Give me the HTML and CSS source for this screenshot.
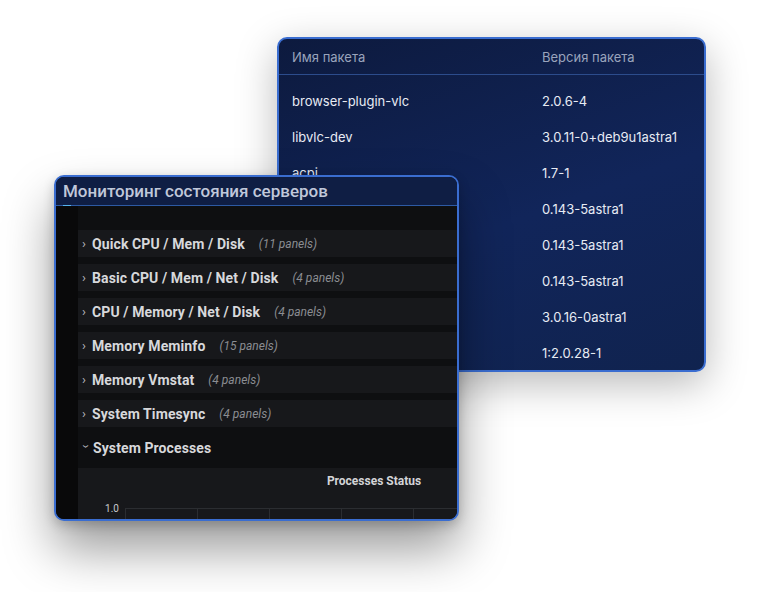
FILE: index.html
```html
<!DOCTYPE html>
<html lang="ru">
<head>
    <meta charset="UTF-8">
    <meta name="viewport" content="width=device-width, initial-scale=1.0">
    <title>Пакеты и мониторинг</title>
    <link rel="stylesheet" href="styles.css">
</head>

<body>
    <div class="desk">

        <div class="window packages">
            <div class="pkg-head">
                <span>Имя пакета</span>
                <span>Версия пакета</span>
            </div>
            <div class="pkg-list">
                <div class="pkg-row"><span>browser-plugin-vlc</span><span>2.0.6-4</span></div>
                <div class="pkg-row"><span>libvlc-dev</span><span>3.0.11-0+deb9u1astra1</span></div>
                <div class="pkg-row"><span>acpi</span><span>1.7-1</span></div>
                <!-- names under the front window are hidden anyway -->
                <div class="pkg-row"><span></span><span>0.143-5astra1</span></div>
                <div class="pkg-row"><span></span><span>0.143-5astra1</span></div>
                <div class="pkg-row"><span></span><span>0.143-5astra1</span></div>
                <div class="pkg-row"><span></span><span>3.0.16-0astra1</span></div>
                <div class="pkg-row"><span></span><span>1:2.0.28-1</span></div>
            </div>
        </div>

        <div class="window monitor">
            <div class="mon-title">Мониторинг состояния серверов</div>
            <div class="mon-body">
                <div class="strip"></div>
                <div class="mon-content">
                    <div class="group"><span class="chev">›</span><b>Quick CPU / Mem / Disk</b><i>(11 panels)</i></div>
                    <div class="group"><span class="chev">›</span><b>Basic CPU / Mem / Net / Disk</b><i>(4 panels)</i></div>
                    <div class="group"><span class="chev">›</span><b>CPU / Memory / Net / Disk</b><i>(4 panels)</i></div>
                    <div class="group"><span class="chev">›</span><b>Memory Meminfo</b><i>(15 panels)</i></div>
                    <div class="group"><span class="chev">›</span><b>Memory Vmstat</b><i>(4 panels)</i></div>
                    <div class="group"><span class="chev">›</span><b>System Timesync</b><i>(4 panels)</i></div>
                    <div class="group open"><span class="chev down">›</span><b>System Processes</b></div>

                    <div class="panel">
                        <div class="panel-title">Processes Status</div>
                        <div class="chart">
                            <span class="axis-label">1.0</span>
                            <div class="grid">
                                <div class="cell"></div>
                                <div class="cell"></div>
                                <div class="cell"></div>
                                <div class="cell"></div>
                                <div class="cell"></div>
                                <div class="cell"></div>
                                <div class="cell"></div>
                            </div>
                        </div>
                    </div>
                </div>
            </div>
        </div>

    </div>
</body>
</html>
```

FILE: styles.css
```css
body {
    margin: 0;
    background-color: #ffffff;
}

.desk {
    position: relative;
    width: 760px;
    height: 592px;
    overflow: hidden;
}

.window {
    position: absolute;
    box-sizing: border-box;
    border: 2px solid #3a6dd0;
    border-radius: 10px;
    overflow: hidden;
}

/* back window: package list */
.packages {
    left: 277px;
    top: 37px;
    width: 429px;
    height: 335px;
    background: linear-gradient(160deg, #0d1a3e 0%, #11255a 55%, #10234f 100%);
    box-shadow: 0 12px 40px rgba(0, 0, 0, 0.28);
    font-family: Inter, "Liberation Sans", sans-serif;
    font-size: 13px;
}

.pkg-head {
    display: grid;
    grid-template-columns: 250px 1fr;
    height: 35px;
    align-items: center;
    padding-left: 13px;
    color: #9aa4bc;
    border-bottom: 1px solid #2c4c8c;
}

.pkg-list {
    padding-top: 8px;
}

.pkg-row {
    display: grid;
    grid-template-columns: 250px 1fr;
    height: 36px;
    align-items: center;
    padding-left: 13px;
    color: #e7ebf4;
}

/* front window: monitoring */
.monitor {
    left: 54px;
    top: 175px;
    width: 405px;
    height: 346px;
    display: flex;
    flex-direction: column;
    background-color: #0e0f11;
    box-shadow: 0 28px 50px rgba(0, 0, 0, 0.4), 0 4px 12px rgba(0, 0, 0, 0.2);
    font-family: Roboto, "Liberation Sans", sans-serif;
}

.mon-title {
    position: relative;
    flex-shrink: 0;
    height: 28px;
    line-height: 28px;
    padding-left: 7px;
    font-size: 17px;
    font-weight: 500;
    color: #c0c8da;
    background-color: #0f1e44;
    border-bottom: 1px solid #2d5aa4;
    white-space: nowrap;
}

.mon-title::after {
    content: "";
    position: absolute;
    left: 7px;
    bottom: -1px;
    width: 8px;
    height: 1px;
    background-color: #56b4ee;
}

.mon-body {
    flex: 1;
    display: flex;
    min-height: 0;
}

.strip {
    width: 22px;
    flex-shrink: 0;
    background-color: #09090a;
}

.mon-content {
    flex: 1;
    display: flex;
    flex-direction: column;
    gap: 7px;
    padding-top: 24px;
    min-width: 0;
}

.group {
    flex-shrink: 0;
    width: 592px;
    height: 27px;
    display: flex;
    align-items: center;
    padding-left: 4px;
    background-color: #17181b;
    white-space: nowrap;
}

.group b {
    font-size: 14px;
    font-weight: 700;
    letter-spacing: 0.1px;
    color: #d7d8db;
}

.group i {
    margin-left: 14px;
    font-size: 12px;
    color: #8b8d92;
}

.group.open {
    background-color: transparent;
}

.chev {
    width: 10px;
    font-size: 13px;
    color: #b9bbc0;
}

.chev.down {
    display: inline-block;
    transform: rotate(90deg);
    width: 6px;
    margin-right: 4px;
    margin-left: 1px;
}

.panel {
    flex-shrink: 0;
    width: 592px;
    height: 60px;
    background-color: #17181b;
    display: flex;
    flex-direction: column;
}

.panel-title {
    height: 26px;
    line-height: 26px;
    text-align: center;
    font-size: 12px;
    font-weight: 700;
    color: #d3d4d7;
}

.chart {
    display: flex;
    align-items: flex-start;
    padding-top: 9px;
    flex: 1;
}

.axis-label {
    width: 47px;
    text-align: right;
    padding-right: 6px;
    box-sizing: border-box;
    font-size: 10px;
    line-height: 12px;
    color: #c8c9cc;
}

.grid {
    display: flex;
    margin-top: 5px;
    border-top: 1px solid #2b2d31;
    height: 20px;
}

.cell {
    box-sizing: border-box;
    width: 72px;
    border-left: 1px solid #2b2d31;
}
```
